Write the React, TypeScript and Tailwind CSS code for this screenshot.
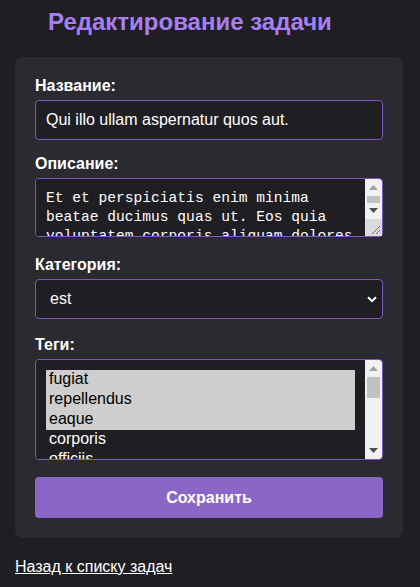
import { useState } from "react";

const TAGS = ["fugiat", "repellendus", "eaque", "corporis", "officiis", "sint", "dolorem", "quia"];

// Windows-style scrollbar drawn over the field (the headless browser hides native ones)
function FakeScrollbar({ thumbTop, thumbH, resizer }: { thumbTop: number; thumbH: number; resizer?: boolean }) {
  return (
    <div className="pointer-events-none absolute top-px right-px bottom-px flex w-[17px] flex-col rounded-tr-[3px] rounded-br-[3px] bg-[#f1f1f1]">
      <div className="relative flex-1">
        <svg className="absolute top-[6px] left-[4px]" width="9" height="5" viewBox="0 0 9 5">
          <path d="M4.5 0 L9 5 L0 5 Z" fill="#a3a3a3" />
        </svg>
        <div
          className="absolute left-[2px] w-[13px] bg-[#c1c1c1]"
          style={{ top: thumbTop, height: thumbH }}
        />
        <svg className="absolute bottom-[6px] left-[4px]" width="9" height="5" viewBox="0 0 9 5">
          <path d="M0 0 L9 0 L4.5 5 Z" fill="#505050" />
        </svg>
      </div>
      {resizer && (
        <div className="relative h-[17px] bg-[#dcdcdc]">
          <svg className="absolute right-0 bottom-0" width="17" height="17" viewBox="0 0 17 17">
            <path d="M15 7 L7 15 M15 11 L11 15" stroke="#6b6b6b" strokeWidth="1" />
          </svg>
        </div>
      )}
    </div>
  );
}

export default function App() {
  const [title, setTitle] = useState("Qui illo ullam aspernatur quos aut.");
  const [desc, setDesc] = useState(
    "Et et perspiciatis enim minima beatae ducimus quas ut. Eos quia voluptatem corporis aliquam dolores et. Est nisi deleniti sed."
  );
  const [category, setCategory] = useState("est");
  const [tags, setTags] = useState<string[]>(["fugiat", "repellendus", "eaque"]);

  const label = "mb-[5px] block text-[16px] font-bold leading-[18px] text-white";
  const field =
    "w-full rounded-[4px] border border-[#7e57c2] bg-[#1f1e23] text-white outline-none";

  return (
    <div className="min-h-screen bg-[#1f1e23] pt-2 pr-[17px] pl-[15px] font-['Liberation_Sans',Arial,sans-serif] text-white">
      <h1 className="mb-[22px] pl-[33px] text-[24px] leading-[27px] font-bold text-[#a67ff2]">
        Редактирование задачи
      </h1>

      <form
        onSubmit={(e) => e.preventDefault()}
        className="rounded-[8px] bg-[#2b2a30] p-5"
      >
        <label className={label}>Название:</label>
        <input
          value={title}
          onChange={(e) => setTitle(e.target.value)}
          className={`${field} mb-[15px] h-10 px-[10px] text-[16px]`}
        />

        <label className={label}>Описание:</label>
        <div className="relative mb-[19px]">
          <textarea
            value={desc}
            onChange={(e) => setDesc(e.target.value)}
            className={`${field} block h-[59px] resize-none py-[10px] pr-[27px] pl-[10px] font-['Liberation_Mono',monospace] text-[14.6px] leading-[19px] [scrollbar-width:none]`}
          />
          <FakeScrollbar thumbTop={17} thumbH={7} resizer />
        </div>

        <label className={label}>Категория:</label>
        <div className="relative mb-[17px]">
          <select
            value={category}
            onChange={(e) => setCategory(e.target.value)}
            className={`${field} block h-10 appearance-none pr-[30px] pl-[14px] text-[16px]`}
          >
            <option value="est">est</option>
            <option value="velit">velit</option>
            <option value="magni">magni</option>
          </select>
          <svg
            className="pointer-events-none absolute top-[17px] right-[6px]"
            width="10"
            height="7"
            viewBox="0 0 10 7"
          >
            <path d="M1 1.2 L5 5.2 L9 1.2" fill="none" stroke="#ffffff" strokeWidth="2" />
          </svg>
        </div>

        <label className={label}>Теги:</label>
        <div className="relative mb-[17px]">
          <select
            multiple
            value={tags}
            onChange={(e) => setTags(Array.from(e.target.selectedOptions).map((o) => o.value))}
            className={`${field} block h-[101px] py-[10px] pr-[27px] pl-[10px] text-[16px] leading-[20px] [scrollbar-width:none]`}
          >
            {TAGS.map((t) => (
              <option key={t} value={t} className="h-5 pl-[3px] checked:bg-[#cecece] checked:text-black">
                {t}
              </option>
            ))}
          </select>
          <FakeScrollbar thumbTop={17} thumbH={21} />
        </div>

        <button
          type="submit"
          className="h-[41px] w-full rounded-[4px] bg-[#8a66c6] text-[16px] font-bold text-white"
        >
          Сохранить
        </button>
      </form>

      <a href="#" className="mt-5 inline-block text-[16px] leading-[18px] text-white underline">
        Назад к списку задач
      </a>
    </div>
  );
}
